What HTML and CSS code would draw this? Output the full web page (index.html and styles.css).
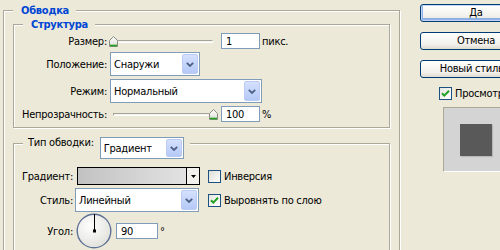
FILE: index.html
```html
<!DOCTYPE html>
<html lang="ru">
<head>
<meta charset="utf-8">
<title>Обводка</title>
<link rel="stylesheet" href="styles.css">
</head>
<body>
<div class="dialog">
  <fieldset class="group outer">
    <legend class="title">Обводка</legend>

    <fieldset class="group struct">
      <legend class="title">Структура</legend>
      <div class="form">
        <span class="lbl">Размер:</span>
        <div class="ctl">
          <div class="slider">
            <span class="track"></span>
            <svg class="thumb" style="left:0%" width="9" height="11" viewBox="0 0 9 11"><defs><linearGradient id="tg1" x1="0" y1="0" x2="0" y2="1"><stop offset="0" stop-color="#ffffff"/><stop offset="1" stop-color="#dcdcd4"/></linearGradient></defs><path d="M4.5 0.5L8.5 4.5V10.5H0.5V4.5Z" fill="url(#tg1)" stroke="#8c8c84"/><path d="M1 9.5H8" stroke="#21a121" stroke-width="1.6"/></svg>
          </div>
          <input class="num" value="1">
          <span class="unit">пикс.</span>
        </div>

        <span class="lbl">Положение:</span>
        <div class="ctl">
          <div class="combo w90"><span class="val">Снаружи</span><span class="arrow"><svg width="8" height="5" viewBox="0 0 8 5"><path d="M0.8 0.8L4 4L7.2 0.8" fill="none" stroke="#4d6185" stroke-width="1.8"/></svg></span></div>
        </div>

        <span class="lbl">Режим:</span>
        <div class="ctl">
          <div class="combo w152"><span class="val">Нормальный</span><span class="arrow"><svg width="8" height="5" viewBox="0 0 8 5"><path d="M0.8 0.8L4 4L7.2 0.8" fill="none" stroke="#4d6185" stroke-width="1.8"/></svg></span></div>
        </div>

        <span class="lbl">Непрозрачность:</span>
        <div class="ctl">
          <div class="slider">
            <span class="track"></span>
            <svg class="thumb" style="left:100%" width="9" height="11" viewBox="0 0 9 11"><defs><linearGradient id="tg2" x1="0" y1="0" x2="0" y2="1"><stop offset="0" stop-color="#ffffff"/><stop offset="1" stop-color="#dcdcd4"/></linearGradient></defs><path d="M4.5 0.5L8.5 4.5V10.5H0.5V4.5Z" fill="url(#tg2)" stroke="#8c8c84"/><path d="M1 9.5H8" stroke="#21a121" stroke-width="1.6"/></svg>
          </div>
          <input class="num" value="100">
          <span class="unit">%</span>
        </div>
      </div>
    </fieldset>

    <fieldset class="group stroke">
      <legend class="title plain">
        <span class="legend-lbl">Тип обводки:</span>
        <span class="combo w84 legend-combo"><span class="val">Градиент</span><span class="arrow"><svg width="8" height="5" viewBox="0 0 8 5"><path d="M0.8 0.8L4 4L7.2 0.8" fill="none" stroke="#4d6185" stroke-width="1.8"/></svg></span></span>
      </legend>
      <div class="form2">
        <span class="lbl">Градиент:</span>
        <div class="swatch"><span class="grad"></span><span class="drop"><svg width="5" height="3" viewBox="0 0 5 3"><path d="M0 0H5L2.5 3Z" fill="#000"/></svg></span></div>
        <label class="check"><span class="cb"></span><span>Инверсия</span></label>

        <span class="lbl">Стиль:</span>
        <div class="combo style-combo"><span class="val">Линейный</span><span class="arrow"><svg width="8" height="5" viewBox="0 0 8 5"><path d="M0.8 0.8L4 4L7.2 0.8" fill="none" stroke="#4d6185" stroke-width="1.8"/></svg></span></div>
        <label class="check"><span class="cb on"><svg width="11" height="11" viewBox="0 0 11 11"><path d="M2 5.2L4.3 7.6L9 2.8" fill="none" stroke="#21a121" stroke-width="2"/></svg></span><span>Выровнять по слою</span></label>

        <span class="lbl angle-lbl">Угол:</span>
        <div class="angle">
          <svg class="dial" width="36" height="36" viewBox="0 0 36 36"><defs><radialGradient id="dg" cx="40%" cy="35%" r="70%"><stop offset="0" stop-color="#ffffff"/><stop offset="1" stop-color="#e0e0da"/></radialGradient></defs><circle cx="18" cy="18" r="16.8" fill="url(#dg)" stroke="#5e7196" stroke-width="1.4"/><path d="M18.5 18V1" stroke="#000" stroke-width="1"/><rect x="17" y="16.5" width="3" height="3" fill="#000"/></svg>
          <input class="num angle-num" value="90">
          <span class="deg">°</span>
        </div>
      </div>
    </fieldset>
  </fieldset>

  <div class="side">
    <div class="btns">
      <button class="btn default">Да</button>
      <button class="btn">Отмена</button>
      <button class="btn">Новый стиль...</button>
    </div>
    <label class="check preview-check"><span class="cb on"><svg width="11" height="11" viewBox="0 0 11 11"><path d="M2 5.2L4.3 7.6L9 2.8" fill="none" stroke="#21a121" stroke-width="2"/></svg></span><span>Просмотр</span></label>
    <div class="preview"><span class="sample"></span></div>
  </div>
</div>
</body>
</html>
```

FILE: styles.css
```css
* { box-sizing: border-box; }
html, body { margin: 0; padding: 0; }
body {
  width: 500px;
  height: 250px;
  overflow: hidden;
  background: #ece9d8;
  color: #000;
  font: 11px/13px "DejaVu Sans Condensed", "DejaVu Sans", sans-serif;
  letter-spacing: -0.25px;
}
.dialog { display: flex; align-items: flex-start; width: 560px; }

.group {
  margin: 0;
  padding: 0;
  min-width: 0;
  border: 1px solid #aca899;
  box-shadow: inset 1px 1px 0 #fff, 1px 1px 0 #fff;
}
.title {
  margin-left: 9px;
  padding: 0 7px 0 8px;
  background: #ece9d8;
  color: #0046d5;
  font-weight: bold;
  line-height: 13px;
}
.outer { margin: 4px 0 0 3px; width: 397px; height: 320px; flex: none; }
.struct { margin: 1px 9px 0; }
.stroke { margin: 8px 9px 0; height: 160px; }

/* structure form */
.form {
  display: grid;
  grid-template-columns: 93px auto;
  grid-template-rows: 16px 24px 24px 16px;
  column-gap: 3px;
  row-gap: 3px;
  padding: 2px 0 5px;
}
.lbl { text-align: right; align-self: center; white-space: nowrap; }
.ctl { display: flex; align-items: center; }

.slider { position: relative; width: 100px; height: 16px; margin-left: 3px; }
.track {
  position: absolute; left: 0; right: 0; top: 7px; height: 3px;
  border-top: 1px solid #a5a297;
  border-left: 1px solid #a5a297;
  border-bottom: 1px solid #fff;
  border-right: 1px solid #fff;
  border-radius: 1px;
  background: #f4f3ee;
}
.thumb { position: absolute; top: 3px; margin-left: -4px; }

.num {
  width: 39px;
  height: 16px;
  margin: 0 0 0 8px;
  padding: 0 0 0 4px;
  border: 1px solid #7f9db9;
  background: #fff;
  color: #000;
  font: inherit;
  letter-spacing: inherit;
  outline: none;
}
.unit { margin-left: 2px; }

.combo {
  display: flex;
  height: 24px;
  padding: 1px;
  border: 1px solid #7f9db9;
  background: #fff;
}
.combo .val { flex: 1; display: flex; align-items: center; padding-left: 2px; white-space: nowrap; }
.combo .arrow {
  width: 16px;
  display: flex;
  align-items: center;
  justify-content: center;
  border: 1px solid #bccbf4;
  border-radius: 2px;
  background: linear-gradient(#d4e0fd, #b5c9f7);
}
.w90 { width: 90px; }
.w152 { width: 152px; }
.w84 { width: 84px; }

/* stroke type legend */
.plain { color: #000; font-weight: normal; display: flex; align-items: flex-start; padding: 0 6px 0 5px; }
.legend-combo { height: 22px; margin: 1px 0 -8px 6px; }

.form2 {
  display: grid;
  grid-template-columns: 59px 124px auto;
  grid-template-rows: 18px 24px auto;
  column-gap: 3px;
  row-gap: 3px;
  padding-top: 16px;
}
.swatch {
  display: flex;
  width: 123px;
  height: 18px;
  margin-left: 1px;
  border: 1px solid #000;
}
.grad { flex: 1; background: linear-gradient(to right, #c2c2c2, #e2e2e2); border-right: 1px solid #000; }
.drop { width: 12px; display: flex; align-items: center; justify-content: center; background: #f2f1ec; }
.style-combo { width: 124px; margin-left: -1px; }

.check { display: flex; align-items: center; margin-left: 5px; white-space: nowrap; }
.cb {
  width: 13px;
  height: 13px;
  margin-right: 3px;
  border: 1px solid #1c5180;
  background: linear-gradient(135deg, #dcdcd7, #ffffff);
  display: flex;
  align-items: center;
  justify-content: center;
  flex: none;
}
.cb.on { background: linear-gradient(135deg, #e6e6e0, #ffffff); }

.angle-lbl { margin-top: -2px; }
.angle { display: flex; align-items: center; margin-top: -2px; }
.dial { display: block; flex: none; }
.angle-num { width: 42px; margin-left: 4px; }
.deg { margin-left: 2px; align-self: center; }

/* right side */
.side { margin: 4px 0 0 20px; display: flex; flex-direction: column; flex: none; }
.btns { display: flex; flex-direction: column; gap: 10px; }
.btn {
  width: 112px;
  height: 18px;
  padding: 0;
  border: 1px solid #003c74;
  border-radius: 3px;
  background: linear-gradient(#ffffff, #f2f1ec 70%, #dedbcf);
  color: #000;
  font: inherit;
  letter-spacing: inherit;
  line-height: 16px;
  text-align: center;
}
.btn.default { box-shadow: inset 0 0 0 1px #c2d6f7, inset 0 -1px 0 2px #8fb0e6; }
.preview-check { margin: 9px 0 0 19px; }
.preview {
  width: 65px;
  height: 65px;
  margin: 7px 0 0 23px;
  border: 1px solid;
  border-color: #aca899 #fff #fff #aca899;
  background: #d4d4d4;
  display: flex;
  align-items: center;
  justify-content: center;
}
.sample { width: 32px; height: 32px; background: #595959; box-shadow: 1px 1px 1px #b8b8b8; }
```
